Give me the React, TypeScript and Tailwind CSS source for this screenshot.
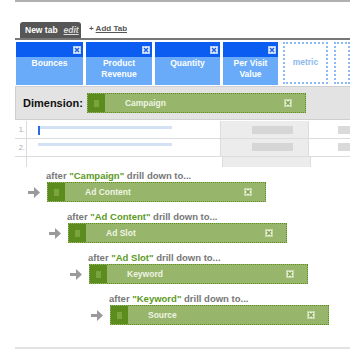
import React from "react";

const metrics = [
  { lines: ["Bounces"], width: "w-[67px]" },
  { lines: ["Product", "Revenue"], width: "w-[66px]" },
  { lines: ["Quantity"], width: "w-[65px]" },
  { lines: ["Per Visit", "Value"], width: "w-[55px]" },
];

const steps = [
  { after: "Campaign", label: "Ad Content", indent: "ml-[28px]" },
  { after: "Ad Content", label: "Ad Slot", indent: "ml-[49px]" },
  { after: "Ad Slot", label: "Keyword", indent: "ml-[70px]" },
  { after: "Keyword", label: "Source", indent: "ml-[91px]" },
];

function CloseIcon({ tone }: { tone: "blue" | "green" }) {
  const blue = tone === "blue";
  return (
    <span
      className={`flex h-[8px] w-[8px] items-center justify-center border ${
        blue ? "border-[#b9d0f6] bg-[#e6effd]" : "border-[#c4d6a8] bg-[#e8f0dc]"
      }`}
    >
      <svg viewBox="0 0 6 6" className="h-[6px] w-[6px]">
        <path
          d="M1 1l4 4M5 1L1 5"
          stroke={blue ? "#1f5fd8" : "#7ea24a"}
          strokeWidth={1.5}
        />
      </svg>
    </span>
  );
}

function MetricBox({ lines, width }: { lines: string[]; width: string }) {
  return (
    <div className={`flex h-[43px] flex-col ${width}`}>
      <div className="flex h-[15px] items-center justify-end bg-[#0b5cf1] pr-[2px]">
        <CloseIcon tone="blue" />
      </div>
      <div className="flex-1 bg-[#69abf8] pt-[1px] text-center text-[8.5px] font-bold leading-[11px] text-white">
        {lines.map((l) => (
          <div key={l}>{l}</div>
        ))}
      </div>
    </div>
  );
}

function GreenBar({ label }: { label: string }) {
  return (
    <div className="flex h-[20px] w-[219px] items-center border border-dotted border-[#5e8e1f] bg-[#98b56c]">
      <div className="flex h-full w-[17px] items-center justify-center bg-[#5b8c1d]">
        <span className="h-[7px] w-[5px] bg-[#7ba43f]" />
      </div>
      <span className="pl-[20px] text-[8.5px] font-bold text-[#eef4e3]">{label}</span>
      <span className="ml-auto mr-[13px]">
        <CloseIcon tone="green" />
      </span>
    </div>
  );
}

function Arrow() {
  return (
    <svg viewBox="0 0 12 11" className="h-[11px] w-[12px]">
      <path d="M0 4h6V0L12 5.5 6 11V7H0z" fill="#9a9a9a" />
    </svg>
  );
}

function TableRow({ n, barTop, first }: { n: number; barTop: string; first?: boolean }) {
  return (
    <div className="flex h-[18px] border-b border-[#dcdcdc]">
      <div className="flex w-[12px] items-center justify-end border-r border-[#dcdcdc] pr-[1px] text-[7.5px] text-[#aaa]">
        {n}.
      </div>
      <div className="relative w-[195px]">
        <div className={`ml-[11px] h-[3px] w-[134px] bg-[#d3e1f5] ${barTop}`} />
        {first && (
          <span className="absolute left-[11px] top-[5px] h-[9px] w-[2px] bg-[#2a6ae4]" />
        )}
      </div>
      <div className="w-[89px] border-x border-[#dcdcdc] bg-[#ececec] pl-[31px]">
        <div className={`h-[8px] w-[41px] bg-[#d6d6d6] ${barTop}`} />
      </div>
      <div className="flex-1 pl-[29px]">
        <div className={`h-[8px] w-[12px] bg-[#dadada] ${barTop}`} />
      </div>
    </div>
  );
}

export default function App() {
  return (
    <div className="h-[350px] w-[350px] overflow-hidden bg-white font-['Liberation_Sans',Arial,sans-serif]">
      <div className="ml-[15px] h-[2px] bg-[#b0b0b0]" />

      {/* Tabs */}
      <div className="ml-[20px] mt-[20px] flex h-[16px] items-end">
        <div className="flex h-[16px] w-[61px] items-center rounded-t-[3px] bg-[#565656] pl-[5px] text-[8.5px] font-bold">
          <span className="text-white">New tab</span>
          <span className="ml-[6px] italic text-[#ddd] underline">edit</span>
        </div>
        <div className="mb-[3px] ml-[8px] text-[8px] font-bold text-[#555]">
          + <span className="underline">Add Tab</span>
        </div>
      </div>
      <div className="ml-[15px] h-[2px] bg-[#777]" />

      {/* Metrics */}
      <div className="ml-[16px] mt-[2px] flex">
        <div className="flex gap-[3px]">
          {metrics.map((m) => (
            <MetricBox key={m.lines.join(" ")} lines={m.lines} width={m.width} />
          ))}
        </div>
        <div className="ml-[5px] h-[42px] w-[58px] border-2 border-dotted border-[#8dbaf2] pt-[12px] text-center text-[8.5px] font-bold text-[#8db8ee]">
          metric
        </div>
        <div className="ml-[6px] h-[42px] w-[20px] border-2 border-dotted border-[#8dbaf2]" />
      </div>

      {/* Dimension */}
      <div className="ml-[15px] mt-[1px] flex h-[34px] items-center border-y border-l border-[#cfcfcf] bg-[#e3e3e3] pl-[7px]">
        <span className="text-[11px] font-bold text-[#111]">Dimension:</span>
        <div className="ml-[4px]">
          <GreenBar label="Campaign" />
        </div>
      </div>

      {/* Table */}
      <div className="ml-[15px]">
        <div className="h-[1px]" />
        <TableRow n={1} barTop="mt-[5px]" first />
        <TableRow n={2} barTop="mt-[4px]" />
        <div className="flex h-[10px]">
          <div className="w-[12px] border-r border-[#dcdcdc]" />
          <div className="w-[195px]" />
          <div className="w-[89px] border-x border-[#dcdcdc] bg-[#ececec]" />
        </div>
      </div>

      {/* Drill down steps */}
      <div className="mt-[4px] flex flex-col gap-[10px]">
        {steps.map((s) => (
          <div key={s.label} className={`flex flex-col ${s.indent}`}>
            <div className="pl-[18px] text-[9.5px] font-bold leading-[10px] text-[#777]">
              after <span className="text-[#5c9a1e]">&quot;{s.after}&quot;</span> drill down to...
            </div>
            <div className="mt-[1px] flex items-center">
              <Arrow />
              <div className="ml-[7px]">
                <GreenBar label={s.label} />
              </div>
            </div>
          </div>
        ))}
      </div>

      <div className="ml-[15px] mt-[22px] h-[2px] bg-[#e2e2e2]" />
    </div>
  );
}
